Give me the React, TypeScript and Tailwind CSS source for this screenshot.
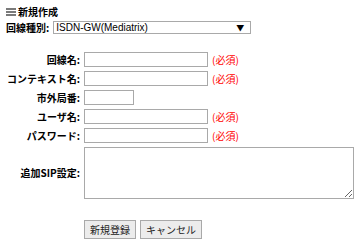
import React from "react";

const FONT = "font-['Noto_Sans_CJK_JP','Noto_Sans',sans-serif]";

function Required() {
  return <span className="ml-[4px] text-[10px] leading-none text-[#ff0000]">(必須)</span>;
}

function Label({ children }: { children: React.ReactNode }) {
  return <div className="text-right text-[10px] font-bold leading-none text-black">{children}</div>;
}

function TextInput({ w }: { w: string }) {
  return <div className={`h-[15px] ${w} border border-[#a9a9a9] bg-white`} />;
}

export default function App() {
  return (
    <div className={`w-[360px] h-[244px] bg-white ${FONT} pt-[6px]`}>
      <div className="flex h-[12px] items-center pl-[6px]">
        <svg width="10" height="8" viewBox="0 0 10 8" className="mr-[2px]">
          <rect x="0" y="0" width="10" height="2" fill="#7a7a7a" />
          <rect x="0" y="3" width="10" height="2" fill="#7a7a7a" />
          <rect x="0" y="6" width="10" height="2" fill="#7a7a7a" />
        </svg>
        <span className="text-[10px] font-bold leading-none text-black">新規作成</span>
      </div>
      <div className="mt-[3px] flex h-[13px] items-center pl-[6px]">
        <span className="text-[10px] font-bold leading-none text-black">回線種別:</span>
        <div className="ml-[4px] flex h-[13px] w-[198px] items-center justify-between border border-[#a9a9a9] bg-white pl-[2px] pr-[6px]">
          <span className="font-['Liberation_Sans',sans-serif] text-[10px] leading-none text-black">ISDN-GW(Mediatrix)</span>
          <span className="text-[8px] leading-none text-black">▼</span>
        </div>
      </div>
      <div className="mt-[18px] grid grid-cols-[80px_auto] items-center gap-x-[4px] gap-y-[4px]">
        <Label>回線名:</Label>
        <div className="flex items-center"><TextInput w="w-[124px]" /><Required /></div>
        <Label>コンテキスト名:</Label>
        <div className="flex items-center"><TextInput w="w-[124px]" /><Required /></div>
        <Label>市外局番:</Label>
        <div className="flex items-center"><TextInput w="w-[50px]" /></div>
        <Label>ユーザ名:</Label>
        <div className="flex items-center"><TextInput w="w-[124px]" /><Required /></div>
        <Label>パスワード:</Label>
        <div className="flex items-center"><TextInput w="w-[124px]" /><Required /></div>
        <Label>追加SIP設定:</Label>
        <div className="flex items-center">
          <textarea className="block h-[52px] w-[270px] border border-[#a9a9a9] bg-white outline-none" />
        </div>
      </div>
      <div className="mt-[21px] flex gap-[4px] pl-[84px]">
        <button className="h-[19px] border border-[#a9a9a9] bg-[#ececec] px-[5px] text-[10px] leading-none text-[#222]">新規登録</button>
        <button className="h-[19px] border border-[#a9a9a9] bg-[#ececec] px-[5px] text-[10px] leading-none text-[#222]">キャンセル</button>
      </div>
    </div>
  );
}
